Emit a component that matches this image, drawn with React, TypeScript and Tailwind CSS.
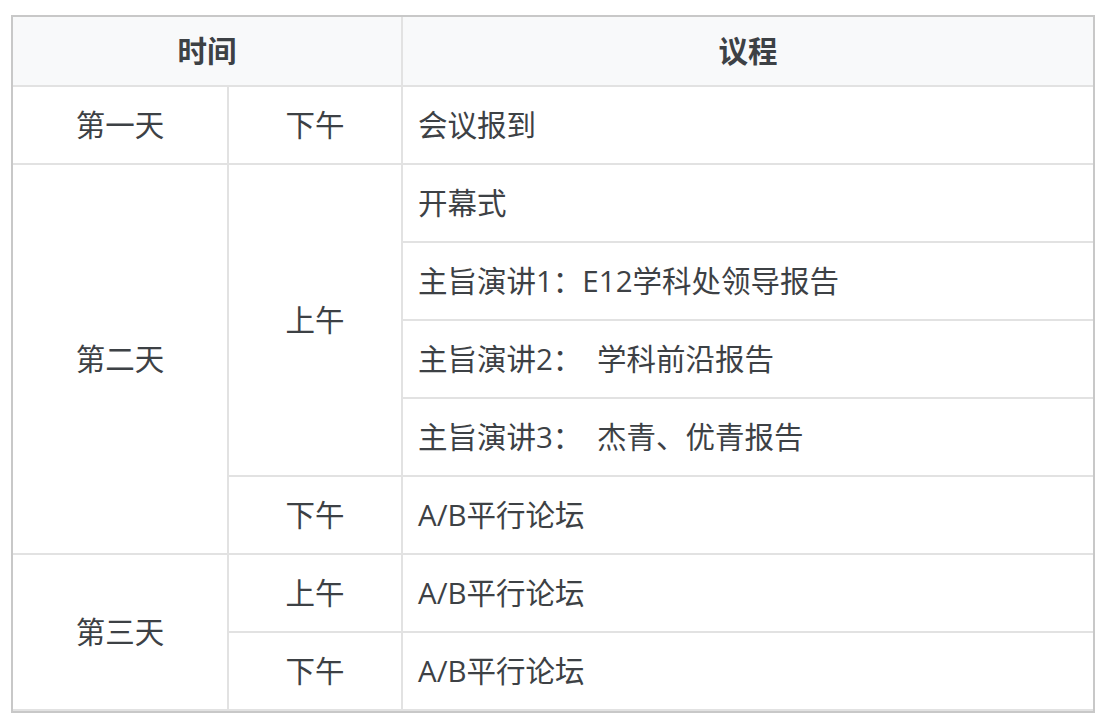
const rows = [
  { day: "第一天", dayRow: 2, daySpan: 1 },
  { day: "第二天", dayRow: 3, daySpan: 5 },
  { day: "第三天", dayRow: 8, daySpan: 2 },
];

const halves = [
  { label: "下午", row: 2, span: 1 },
  { label: "上午", row: 3, span: 4 },
  { label: "下午", row: 7, span: 1 },
  { label: "上午", row: 8, span: 1 },
  { label: "下午", row: 9, span: 1 },
];

const agenda = [
  "会议报到",
  "开幕式",
  "主旨演讲1：E12学科处领导报告",
  "主旨演讲2：\u3000学科前沿报告",
  "主旨演讲3：\u3000杰青、优青报告",
  "A/B平行论坛",
  "A/B平行论坛",
  "A/B平行论坛",
];

const rowStart = ["row-start-2", "row-start-3", "row-start-4", "row-start-5", "row-start-6", "row-start-7", "row-start-8", "row-start-9"];
const spanCls: Record<number, string> = { 1: "row-span-1", 2: "row-span-2", 4: "row-span-4", 5: "row-span-5" };

export default function App() {
  return (
    <div className="bg-white w-[1107px] h-[723px] pt-[15px] pl-[11px]">
      <div
        className="w-[1084px] border-2 border-[#c8c8c8] grid grid-cols-[216px_174px_1fr] grid-rows-[70px_repeat(8,78px)] text-[29.5px] text-[#3d4145]"
        style={{ fontFamily: '"Open Sans", "Noto Sans CJK SC", sans-serif' }}
      >
        <div className="col-span-2 row-start-1 col-start-1 bg-[#f8f9fa] border-r-2 border-b-2 border-[#e2e2e2] flex items-center justify-center font-bold">
          时间
        </div>
        <div className="row-start-1 col-start-3 bg-[#f8f9fa] border-b-2 border-[#e2e2e2] flex items-center justify-center font-bold">
          议程
        </div>
        {rows.map((r) => (
          <div
            key={r.day}
            className={`col-start-1 ${rowStart[r.dayRow - 2]} ${spanCls[r.daySpan]} border-r-2 border-b-2 border-[#e2e2e2] flex items-center justify-center`}
          >
            {r.day}
          </div>
        ))}
        {halves.map((h, i) => (
          <div
            key={i}
            className={`col-start-2 ${rowStart[h.row - 2]} ${spanCls[h.span]} border-r-2 border-b-2 border-[#e2e2e2] flex items-center justify-center`}
          >
            {h.label}
          </div>
        ))}
        {agenda.map((a, i) => (
          <div
            key={i}
            className={`col-start-3 ${rowStart[i]} border-b-2 border-[#e2e2e2] flex items-center pl-[15px]`}
          >
            {a}
          </div>
        ))}
      </div>
    </div>
  );
}
